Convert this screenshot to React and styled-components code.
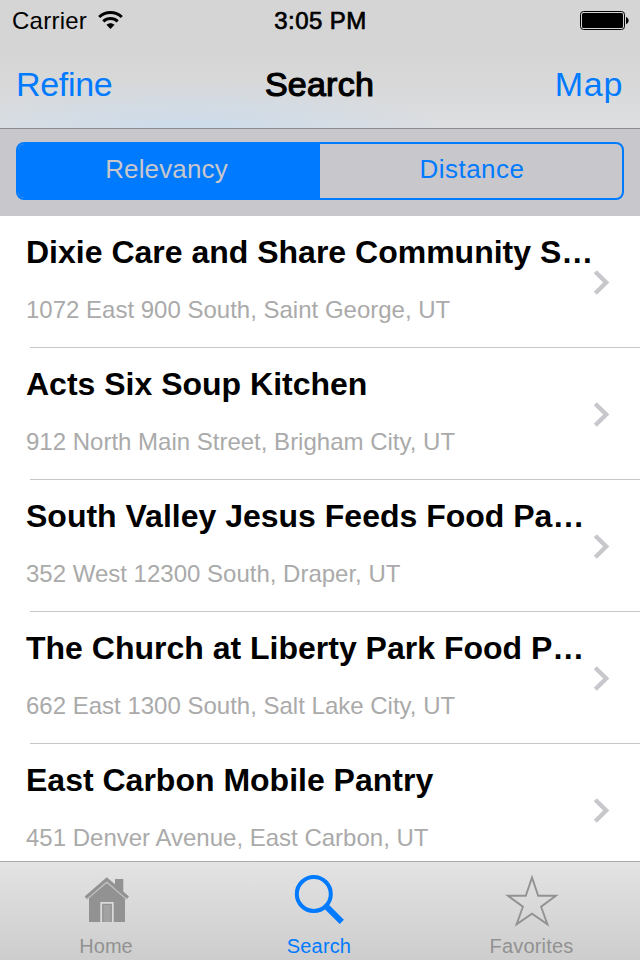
import React from 'react';
import styled, { createGlobalStyle } from 'styled-components';

const BLUE = '#007aff';

const GlobalStyle = createGlobalStyle`
  * { box-sizing: border-box; }
  body { margin: 0; font-family: "Liberation Sans", Arial, sans-serif; background: #fff; }
  button { font: inherit; border: 0; padding: 0; background: none; color: inherit; }
`;

const Screen = styled.div`
  width: 640px;
  height: 960px;
  display: flex;
  flex-direction: column;
  overflow: hidden;
  background: #fff;
`;

const Header = styled.header`
  flex: none;
  height: 129px;
  border-bottom: 1px solid #8b8b8e;
  background:
    radial-gradient(ellipse 270px 55px at 190px 134px, rgba(200, 219, 238, 0.85), rgba(200, 219, 238, 0)),
    linear-gradient(#d5d5d5 0, #d5d5d5 56px, #dddee0 128px);
`;

const StatusBar = styled.div`
  height: 40px;
  padding: 7px 11px 0 12px;
  display: grid;
  grid-template-columns: 1fr auto 1fr;
  align-items: start;
  font-size: 24px;
  line-height: 28px;
`;

const Carrier = styled.div`
  display: flex;
  gap: 11px;
  letter-spacing: 0.25px;
`;

const WifiIcon = styled.svg`
  width: 25px;
  height: 19px;
  margin-top: 3px;
`;

const Clock = styled.time`
  letter-spacing: 0.45px;
  -webkit-text-stroke: 0.7px #000;
`;

const BatteryIcon = styled.svg`
  width: 50px;
  height: 19px;
  margin-top: 4px;
  justify-self: end;
`;

const NavBar = styled.nav`
  height: 88px;
  padding: 24px 17px 0 16px;
  display: grid;
  grid-template-columns: 1fr auto 1fr;
  align-items: start;
  font-size: 34px;
  line-height: 40px;
`;

const NavButton = styled.button`
  color: ${BLUE};
  justify-self: ${(p) => (p.$end ? 'end' : 'start')};
  letter-spacing: ${(p) => (p.$end ? '0.7px' : '-0.3px')};
`;

const Title = styled.h1`
  margin: 0;
  font-size: 34px;
  font-weight: 400;
  letter-spacing: 0.25px;
  -webkit-text-stroke: 1.2px #000;
`;

const FilterBar = styled.div`
  flex: none;
  height: 87px;
  padding: 13px 16px 16px;
  background: #c8c7cc;
`;

const Segments = styled.div`
  height: 58px;
  display: grid;
  grid-template-columns: 1fr 1fr;
  border: 2px solid ${BLUE};
  border-radius: 8px;
  overflow: hidden;
`;

const Segment = styled.button`
  font-size: 26px;
  line-height: 30px;
  padding: ${(p) => (p.$selected ? '0 5px 4px 0' : '0 0 4px 2px')};
  letter-spacing: ${(p) => (p.$selected ? '0.15px' : '0.45px')};
  color: ${(p) => (p.$selected ? '#c8c7cc' : BLUE)};
  background: ${(p) => (p.$selected ? BLUE : 'transparent')};
`;

const List = styled.main`
  flex: 1;
  min-height: 0;
  overflow: hidden;
`;

const Row = styled.article`
  height: 132px;
  padding: 18px 30px 0 26px;
  display: grid;
  grid-template-columns: 1fr auto;
  background: linear-gradient(#c8c7cc, #c8c7cc) 30px 131px / 610px 1px no-repeat;
`;

const RowText = styled.div`
  width: 567px;
  white-space: nowrap;
`;

const RowTitle = styled.h2`
  margin: 0 0 26px;
  font-size: 32px;
  line-height: 36px;
  font-weight: 700;
`;

const Address = styled.p`
  margin: 0;
  font-size: 24px;
  line-height: 28px;
  color: #aaa;
`;

const Chevron = styled.svg`
  width: 17px;
  height: 26px;
  margin-top: 36px;
`;

const TabBar = styled.footer`
  flex: none;
  height: 99px;
  padding: 0 0 2px;
  border-top: 1px solid #aaabac;
  background: linear-gradient(#e3e3e3, #cdcdcd);
  display: grid;
  grid-template-columns: 212px 214px 211px;
`;

const Tab = styled.button`
  display: flex;
  flex-direction: column;
  align-items: center;
  padding-top: 10px;
  font-size: 20px;
  line-height: 24px;
  letter-spacing: ${(p) => p.$tracking || '0'};
  color: ${(p) => (p.$active ? BLUE : '#929292')};
`;

const TabIcon = styled.svg`
  width: 56px;
  height: 56px;
  margin-bottom: 6px;
`;

const places = [
  ['Dixie Care and Share Community S…', '1072 East 900 South, Saint George, UT'],
  ['Acts Six Soup Kitchen', '912 North Main Street, Brigham City, UT'],
  ['South Valley Jesus Feeds Food Pa…', '352 West 12300 South, Draper, UT'],
  ['The Church at Liberty Park Food P…', '662 East 1300 South, Salt Lake City, UT'],
  ['East Carbon Mobile Pantry', '451 Denver Avenue, East Carbon, UT'],
];

function PlaceRow({ title, address }) {
  return (
    <Row>
      <RowText>
        <RowTitle>{title}</RowTitle>
        <Address>{address}</Address>
      </RowText>
      <Chevron viewBox="0 0 17 26" fill="none" stroke="#c7c7cc" strokeWidth="4.4">
        <path d="M2.3 1.8 L13.2 12.5 L2.3 23.2" />
      </Chevron>
    </Row>
  );
}

export default function App() {
  return (
    <Screen>
      <GlobalStyle />
      <Header>
        <StatusBar>
          <Carrier>
            <span>Carrier</span>
            <WifiIcon viewBox="0 0 25 19">
              <g fill="none" stroke="#000" strokeWidth="3">
                <path d="M1.2 7 C7.5 .9 17.5 .9 23.8 7" />
                <path d="M5.3 11.3 C9.5 7.5 15.5 7.5 19.7 11.3" />
              </g>
              <path d="M8.4 14.8 C10.8 12.6 14.2 12.6 16.6 14.8 L12.5 19 Z" />
            </WifiIcon>
          </Carrier>
          <Clock>3:05 PM</Clock>
          <BatteryIcon viewBox="0 0 50 19">
            <rect x="1.5" y=".5" width="44" height="18" rx="3" fill="none" stroke="#000" />
            <rect x="3" y="2" width="41" height="15" rx="1.5" />
            <path d="M47 6 C50.5 7 50.5 12 47 13 Z" />
          </BatteryIcon>
        </StatusBar>
        <NavBar>
          <NavButton>Refine</NavButton>
          <Title>Search</Title>
          <NavButton $end>Map</NavButton>
        </NavBar>
      </Header>
      <FilterBar>
        <Segments>
          <Segment $selected>Relevancy</Segment>
          <Segment>Distance</Segment>
        </Segments>
      </FilterBar>
      <List>
        {places.map(([title, address]) => (
          <PlaceRow key={title} title={title} address={address} />
        ))}
      </List>
      <TabBar>
        <Tab>
          <TabIcon viewBox="0 0 56 56">
            <path d="M37 7 H45.3 V24 L37 17 Z M11 24 L28.8 9 L47 24 V50 H11 Z" fill="#929292" />
            <path d="M8.6 27.4 L28.8 10.2 L49 27.4" fill="none" stroke="#c2c2c2" strokeWidth="1.3" />
            <path d="M7.6 25.6 L28.8 7.2 L50 25.6" fill="none" stroke="#929292" strokeWidth="3" />
            <path d="M23.2 50 V30.9 H34.8 V50" fill="#929292" stroke="#dadada" strokeWidth="1.8" />
            <path d="M25.5 33 H32.5 V50 H25.5 Z" fill="#a2a2a2" />
          </TabIcon>
          Home
        </Tab>
        <Tab $active $tracking="0.15px">
          <TabIcon viewBox="0 0 56 56" fill="none" stroke={BLUE}>
            <circle cx="22.8" cy="22" r="17" strokeWidth="4" />
            <path d="M35.5 34.7 L50.8 49.8" strokeWidth="6" />
          </TabIcon>
          Search
        </Tab>
        <Tab $tracking="0.2px">
          <TabIcon viewBox="0 0 56 56" fill="none" stroke="#929292" strokeWidth="1.9">
            <path d="M28 5.5 L34.2 23.8 H52 L37.1 34.7 L43.4 52.2 L28 41.6 L12.6 52.2 L18.9 34.7 L4 23.8 H21.8 Z" />
          </TabIcon>
          Favorites
        </Tab>
      </TabBar>
    </Screen>
  );
}
